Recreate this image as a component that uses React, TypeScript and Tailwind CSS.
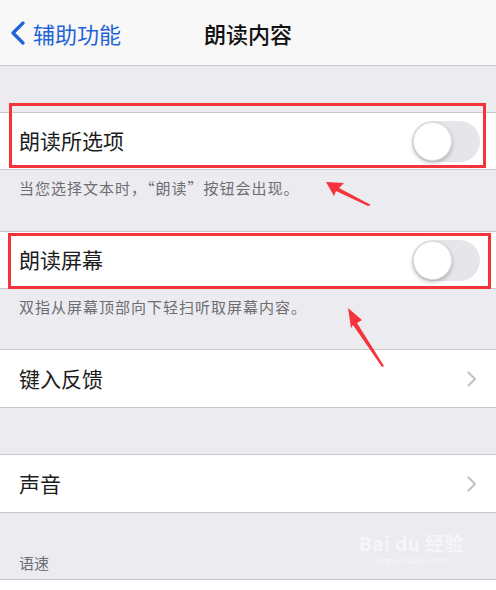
import React from "react";

const font = { fontFamily: '"Noto Sans CJK SC", "Noto Sans", sans-serif' };

const Toggle = () => (
  <div className="w-[68px] h-[41px] rounded-full bg-[#e5e5ea] p-[1px] flex items-center">
    <div className="w-[39px] h-[39px] rounded-full bg-white shadow-[0_2px_4px_rgba(0,0,0,0.25)] border border-[#e0e0e0]" />
  </div>
);

const Chevron = () => (
  <svg width="10" height="16" viewBox="0 0 10 16" className="mr-[19px]">
    <path d="M1.5 1.5 L8 8 L1.5 14.5" fill="none" stroke="#c4c4c7" strokeWidth="2.2" strokeLinecap="round" strokeLinejoin="round" />
  </svg>
);

const App = () => {
  return (
    <div className="relative w-[496px] h-[590px] overflow-hidden bg-[#ebebf0]" style={font}>
      {/* nav bar */}
      <header className="h-[66px] bg-[#f8f8f8] border-b border-[#c8c8cc] flex items-center relative">
        <div className="flex items-center pl-[10px] text-[#1f63d6]">
          <svg width="16" height="24" viewBox="0 0 16 24">
            <path d="M13 2 L3 12 L13 22" fill="none" stroke="#1f63d6" strokeWidth="3.2" strokeLinecap="round" strokeLinejoin="round" />
          </svg>
          <span className="ml-[7px] text-[22px] leading-none">辅助功能</span>
        </div>
        <div className="absolute left-0 right-0 text-center text-[22px] leading-none text-[#111] font-medium pointer-events-none">
          朗读内容
        </div>
      </header>

      <div className="h-[46px]" />

      {/* row 1 */}
      <div className="relative h-[58px] bg-white border-y border-[#c8c8cc] flex items-center justify-between pl-[19px] pr-[16px]">
        <span className="text-[21px] text-[#1c1c1c]">朗读所选项</span>
        <Toggle />
        <div className="absolute left-[9px] top-[-10px] w-[477px] h-[65px] border-[3px] border-[#f5333a]" />
      </div>
      <div className="h-[61px] pl-[19px] pt-[7px] text-[15px] tracking-[1px] text-[#6d6d72]">
        当您选择文本时，“朗读”按钮会出现。
      </div>

      {/* row 2 */}
      <div className="relative h-[58px] bg-white border-y border-[#c8c8cc] flex items-center justify-between pl-[19px] pr-[16px]">
        <span className="text-[21px] text-[#1c1c1c]">朗读屏幕</span>
        <Toggle />
        <div className="absolute left-[8px] top-[1px] w-[483px] h-[56px] border-[3px] border-[#f5333a]" />
      </div>
      <div className="h-[60px] pl-[19px] pt-[7px] text-[15px] tracking-[1px] text-[#6d6d72]">
        双指从屏幕顶部向下轻扫听取屏幕内容。
      </div>

      {/* row 3 */}
      <div className="h-[59px] bg-white border-y border-[#c8c8cc] flex items-center justify-between pl-[19px]">
        <span className="text-[21px] text-[#1c1c1c]">键入反馈</span>
        <Chevron />
      </div>

      <div className="h-[46px]" />

      {/* row 4 */}
      <div className="h-[59px] bg-white border-y border-[#c8c8cc] flex items-center justify-between pl-[19px]">
        <span className="text-[21px] text-[#1c1c1c]">声音</span>
        <Chevron />
      </div>

      <div className="h-[66px] flex items-end pl-[19px] pb-[5px] text-[15px] text-[#6d6d72] relative">
        语速
        <div className="absolute right-[32px] top-[20px] flex flex-col items-center text-white/60 leading-none">
          <span className="text-[19px] font-bold tracking-wide">Bai du 经验</span>
          <span className="text-[8px] mt-[5px]">jingyan.baidu.com</span>
        </div>
      </div>
      <div className="bg-white border-t border-[#c8c8cc] h-[20px]" />

      {/* annotation arrows */}
      <svg className="absolute inset-0 pointer-events-none" width="496" height="590">
        <polygon points="326,182 344,183 339,188 371,205 368,206 336,191 334,196" fill="#f5333a" />
        <polygon points="348,308 362,320 357,323 384,366 382,367 353,325 351,328" fill="#f5333a" />
      </svg>
    </div>
  );
};

export default App;
